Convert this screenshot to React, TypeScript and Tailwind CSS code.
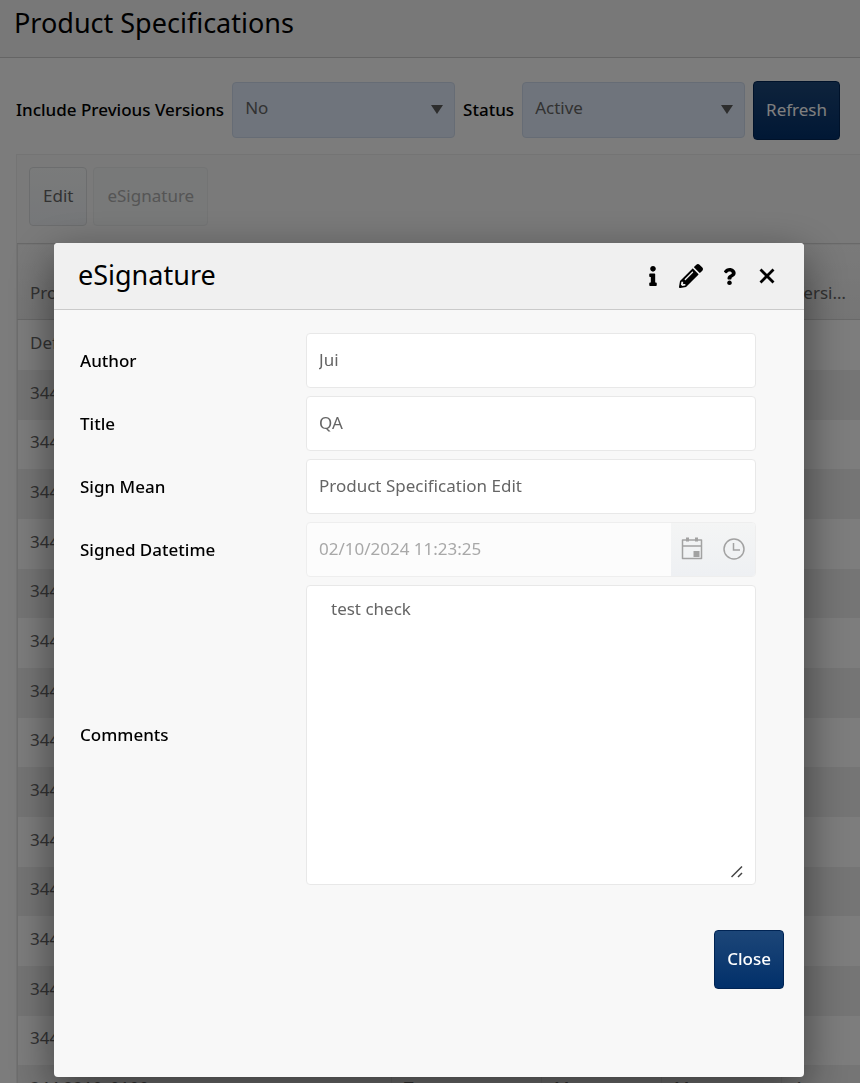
import type { ReactNode } from "react";
import { FaInfo, FaPencilAlt, FaQuestion } from "react-icons/fa";

const rows = [
  "Default",
  ...Array.from({ length: 14 }, () => "344"),
];

const primaryButton =
  "h-[59px] rounded border border-[#002454] bg-linear-to-b from-[#1c4678] to-[#02306a] px-3 pb-0.5 text-white";

const fieldBox =
  "w-full rounded border border-[#e8e8e8] bg-white text-[#656565] outline-none";

function Filter({
  id,
  label,
  value,
}: {
  id: string;
  label: string;
  value: string;
}) {
  return (
    <>
      <label htmlFor={id} className="shrink-0 pb-0.5 font-medium text-black">
        {label}
      </label>
      <div className="relative min-w-0 flex-1 pb-0.5">
        <select
          id={id}
          defaultValue={value}
          className="block h-14 w-full appearance-none rounded border border-[#cdd9ea] bg-[#dfe9f8] px-3 pb-1 text-[#656565]"
        >
          <option>{value}</option>
        </select>
        <svg
          viewBox="0 0 12 9"
          className="pointer-events-none absolute top-[23px] right-3 h-[9px] w-3 fill-[#5a5a5a]"
        >
          <path d="M0 0h12L6 9z" />
        </svg>
      </div>
    </>
  );
}

function Row({
  id,
  label,
  children,
}: {
  id: string;
  label: string;
  children: ReactNode;
}) {
  return (
    <div className="flex items-center">
      <label htmlFor={id} className="w-[226px] shrink-0 font-medium text-black">
        {label}
      </label>
      <div className="min-w-0 flex-1">{children}</div>
    </div>
  );
}

function TextRow({
  id,
  label,
  value,
}: {
  id: string;
  label: string;
  value: string;
}) {
  return (
    <Row id={id} label={label}>
      <input
        id={id}
        defaultValue={value}
        className={`${fieldBox} block h-[55px] px-3 pb-0.5`}
      />
    </Row>
  );
}

function CalendarIcon() {
  return (
    <svg viewBox="0 0 22 23" className="h-[23px] w-[22px]" fill="none">
      <path
        d="M1.5 3h19v18.5h-19zM1.5 9h19"
        stroke="#a2a2a2"
        strokeWidth="1.5"
        strokeLinejoin="round"
      />
      <path d="M5 .5h3v4H5zM14 .5h3v4h-3zM12.5 14h6v6h-6z" fill="#a2a2a2" />
    </svg>
  );
}

function ClockIcon() {
  return (
    <svg viewBox="0 0 22 22" className="h-[22px] w-[22px]" fill="none">
      <g stroke="#a2a2a2" strokeWidth="1.5">
        <circle cx="11" cy="11" r="10" />
        <path d="M10.5 5v7H17" />
      </g>
    </svg>
  );
}

function SpecificationsPage() {
  return (
    <main>
      <header className="h-[58px] border-b border-[#cacaca] bg-[#f0f0f0] px-3.5 pt-[3px]">
        <h1 className="text-[27px] leading-10 text-black">
          Product Specifications
        </h1>
      </header>

      <div className="flex items-center gap-2 pt-[23px] pr-5 pl-4">
        <Filter id="versions" label="Include Previous Versions" value="No" />
        <Filter id="status" label="Status" value="Active" />
        <button className={primaryButton}>Refresh</button>
      </div>

      <section className="mt-3.5 ml-4 border-t border-l border-[#e8e8e8] bg-[#f5f5f5]">
        <div className="flex gap-1.5 px-3 pt-3 pb-[17px]">
          <button className="h-[59px] rounded border border-[#d8dbdc] bg-linear-to-b from-[#f4f6f6] to-[#eceff3] px-[13px] pb-0.5 text-[#656565]">
            Edit
          </button>
          <button
            disabled
            className="h-[59px] rounded border border-[#e6e8e9] bg-[#f0f3f3] px-[13px] pb-0.5 text-[#aaaaaa]"
          >
            eSignature
          </button>
        </div>

        <table className="w-full table-fixed border-l border-[#dcdcdc] text-left">
          <colgroup>
            <col className="w-[374px]" />
            <col className="w-[150px]" />
            <col className="w-[120px]" />
            <col className="w-[120px]" />
            <col />
          </colgroup>
          <thead>
            <tr className="h-[76px] border-y border-[#d2d2d2] bg-linear-to-b from-[#f4f4f4] to-[#ebebeb] text-[#656565]">
              <th className="px-3 pt-[22px] font-normal">Product</th>
              <th />
              <th />
              <th />
              <th className="truncate px-3 pt-[22px] font-normal">Version No</th>
            </tr>
          </thead>
          <tbody className="text-[#656565]">
            {rows.map((name, i) => (
              <tr
                key={i}
                className="h-[50px] bg-[#fbfbfb] even:bg-[#ebebeb] nth-[3n]:h-[49px]"
              >
                <td className="px-3 pb-1">{name}</td>
                <td />
                <td />
                <td />
                <td />
              </tr>
            ))}
            <tr className="h-[50px] bg-[#ebebeb]">
              <td className="border-r border-[#dcdcdc] px-3 pb-1">
                344 2210_0100
              </td>
              <td className="border-r border-[#dcdcdc] px-3 pb-1">T</td>
              <td className="border-r border-[#dcdcdc] px-3 pb-1">M</td>
              <td className="border-r border-[#dcdcdc] px-3 pb-1">M</td>
              <td className="px-3 pb-1">1</td>
            </tr>
          </tbody>
        </table>
      </section>
    </main>
  );
}

function SignatureDialog() {
  return (
    <div
      role="dialog"
      aria-labelledby="dialog-title"
      className="w-full max-w-[750px] overflow-hidden rounded bg-[#f8f8f8] shadow-[0_14px_44px_rgba(0,0,0,0.5)]"
    >
      <header className="flex h-[67px] items-center justify-between border-b border-[#cacaca] bg-[#f0f0f0] pr-7 pl-6 text-black">
        <h2 id="dialog-title" className="pb-0.5 text-[27px]">
          eSignature
        </h2>
        <div className="flex items-center gap-5">
          <button aria-label="Info">
            <FaInfo className="h-5 w-3" />
          </button>
          <button aria-label="Edit">
            <FaPencilAlt className="size-6" />
          </button>
          <button aria-label="Help">
            <FaQuestion className="h-[17px] w-[13px]" />
          </button>
          <button aria-label="Close dialog" className="pl-0.5">
            <svg viewBox="0 0 18 18" className="size-[18px]">
              <path
                d="M2.5 2.5l13 13M15.5 2.5l-13 13"
                stroke="currentColor"
                strokeWidth="2.8"
              />
            </svg>
          </button>
        </div>
      </header>

      <form className="flex flex-col gap-2 pt-[23px] pr-12 pl-[26px]">
        <TextRow id="author" label="Author" value="Jui" />
        <TextRow id="title" label="Title" value="QA" />
        <TextRow
          id="mean"
          label="Sign Mean"
          value="Product Specification Edit"
        />
        <Row id="signed" label="Signed Datetime">
          <div className="flex h-[55px] overflow-hidden rounded border border-[#eeeeee] bg-[#fcfcfc]">
            <input
              id="signed"
              disabled
              defaultValue="02/10/2024 11:23:25"
              className="min-w-0 flex-1 px-3 pb-0.5 text-[#a8a8a8]"
            />
            <div className="flex w-[84px] bg-linear-to-b from-[#f4f5f5] to-[#eef0f3]">
              <button
                type="button"
                disabled
                aria-label="Pick date"
                className="flex flex-1 items-center justify-center pb-0.5"
              >
                <CalendarIcon />
              </button>
              <button
                type="button"
                disabled
                aria-label="Pick time"
                className="flex flex-1 items-center justify-center pb-0.5"
              >
                <ClockIcon />
              </button>
            </div>
          </div>
        </Row>
        <Row id="comments" label="Comments">
          <div className={`${fieldBox} relative h-[300px] px-3`}>
            <textarea
              id="comments"
              defaultValue="test check"
              className="block h-full w-full resize-none px-3 pt-[11px] leading-6 outline-none"
            />
            <svg
              viewBox="0 0 12 12"
              className="pointer-events-none absolute right-3 bottom-1.5 size-3"
            >
              <path
                d="M.5 11l10.500-10.500M7 11l4-4"
                stroke="#444"
                strokeWidth="1.500"
              />
            </svg>
          </div>
        </Row>
      </form>

      <div className="flex justify-end pt-[45px] pr-5 pb-[88px]">
        <button className={`${primaryButton} font-medium`}>Close</button>
      </div>
    </div>
  );
}

export default function App() {
  return (
    <div className="h-screen overflow-hidden bg-[#f8f8f8] font-['Noto_Sans',sans-serif] text-[17px]">
      <SpecificationsPage />
      <div className="fixed inset-0 flex items-start justify-center overflow-hidden bg-black/50 pt-[243px] pr-0.5">
        <SignatureDialog />
      </div>
    </div>
  );
}
